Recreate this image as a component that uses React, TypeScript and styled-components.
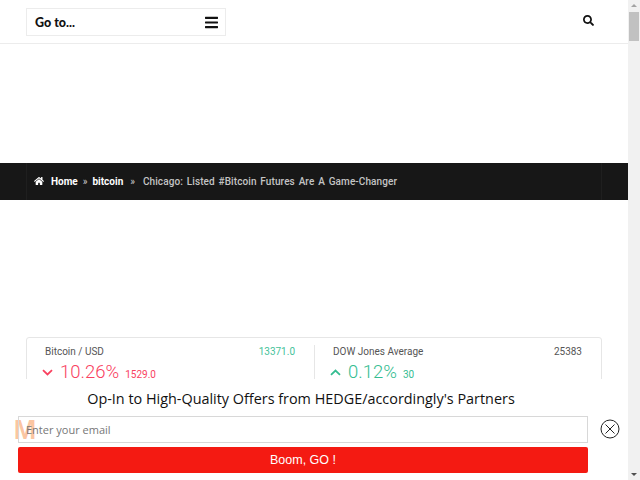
import { createGlobalStyle } from "styled-components";
import styled from "styled-components";
import { FaBars, FaHome, FaSearch } from "react-icons/fa";

const GlobalStyle = createGlobalStyle`
  html, body {
    margin: 0;
    padding: 0;
    background: #fff;
    font-family: "Liberation Sans", Arial, sans-serif;
    overflow: hidden;
  }
`;

const Page = styled.div`
  width: 628px;
  height: 480px;
  overflow: hidden;
`;

const Header = styled.header`
  height: 35px;
  border-bottom: 1px solid #ececec;
  padding: 8px 26px 0;
  margin-bottom: 119px;
  display: flex;
  justify-content: space-between;
  align-items: flex-start;
`;

const GoTo = styled.div`
  width: 200px;
  height: 28px;
  box-sizing: border-box;
  border: 1px solid #ececec;
  padding: 0 7px 0 8px;
  display: flex;
  align-items: center;
  justify-content: space-between;
  font-family: "Lato", sans-serif;
  font-weight: 900;
  font-size: 12.5px;
  color: #111;
  svg {
    width: 13px;
    height: 15px;
  }
`;

const SearchBtn = styled.div`
  margin: 7px 8px 0 0;
  color: #111;
  display: flex;
  svg {
    width: 11px;
    height: 11px;
  }
`;

const Crumbs = styled.div`
  height: 37px;
  background: #171717;
  padding: 0 26px;
  margin-bottom: 137px;
`;

const CrumbsInner = styled.div`
  height: 100%;
  border-left: 1px solid #1f1f1f;
  border-right: 1px solid #1f1f1f;
  padding: 0 0 1px 7px;
  box-sizing: border-box;
  display: flex;
  align-items: center;
  font-family: "Roboto", sans-serif;
  font-size: 10px;
  font-weight: 700;
  color: #fff;
  svg {
    width: 10px;
    height: 10px;
    margin-right: 7px;
  }
`;

const Sep = styled.span`
  color: #ccc;
  margin: 0 5px;
  font-weight: 400;
`;

const LastSep = styled(Sep)`
  margin: 0 8px 0 7px;
`;

const Current = styled.span`
  color: #c4c4c4;
  font-weight: 500;
  letter-spacing: 0.1px;
  word-spacing: 1.2px;
`;

const Ticker = styled.section`
  margin: 0 26px;
  border: 1px solid #e6e6e6;
  border-radius: 3px;
  height: 120px;
  padding-top: 7px;
  box-sizing: border-box;
  display: grid;
  grid-template-columns: 287px 1fr;
`;

const Quote = styled.div<{ $divided?: boolean }>`
  height: 60px;
  padding: 0 19px 0 18px;
  border-left: ${(p) => (p.$divided ? "1px solid #e6e6e6" : "none")};
`;

const QuoteTop = styled.div`
  display: flex;
  justify-content: space-between;
  font-family: "Roboto", sans-serif;
  font-size: 10px;
  line-height: 14px;
  color: #555;
`;

const Price = styled.span<{ $up?: boolean }>`
  color: ${(p) => (p.$up ? "#45c29a" : "#555")};
`;

const QuoteBottom = styled.div<{ $up?: boolean }>`
  display: flex;
  align-items: baseline;
  margin: 1px 0 0 -3px;
  color: ${(p) => (p.$up ? "#35bd91" : "#f9415f")};
  font-family: "Roboto", sans-serif;
  svg {
    width: 11px;
    height: 7px;
    margin-right: 7px;
    align-self: center;
  }
`;

const Pct = styled.span`
  font-size: 18.5px;
  font-weight: 300;
  line-height: 24px;
`;

const Diff = styled.span`
  font-size: 10px;
  margin-left: 6px;
`;

const Popup = styled.aside`
  position: fixed;
  left: 0;
  right: 12px;
  bottom: 0;
  height: 101px;
  background: #fff;
  font-family: "Open Sans", sans-serif;
`;

const PopupTitle = styled.div`
  width: 602px;
  text-align: center;
  font-size: 14.4px;
  line-height: 20px;
  color: #111;
  margin-top: 10px;
`;

const PopupForm = styled.div`
  margin: 7px 0 0 18px;
  width: 570px;
  display: flex;
  flex-direction: column;
  gap: 4px;
`;

const EmailBox = styled.div`
  height: 27px;
  box-sizing: border-box;
  border: 1px solid #d8d8d8;
  padding-left: 7px;
  font-size: 11px;
  line-height: 26px;
  color: #777;
`;

const GoButton = styled.div`
  height: 26px;
  background: #f41a12;
  border-radius: 2px;
  color: #fff;
  text-align: center;
  font-family: "Liberation Sans", Arial, sans-serif;
  font-size: 12.5px;
  line-height: 26px;
`;

const Watermark = styled.div`
  position: absolute;
  z-index: -1;
  left: 10px;
  top: 36px;
  width: 30px;
  height: 30px;
  color: rgba(247, 140, 70, 0.5);
  font-family: "Liberation Sans", Arial, sans-serif;
  font-weight: 700;
  font-size: 27px;
  line-height: 30px;
  text-align: center;
`;

const CloseBtn = styled.div`
  position: absolute;
  left: 600px;
  top: 40px;
  svg {
    display: block;
  }
`;

const Scrollbar = styled.div`
  position: fixed;
  top: 0;
  right: 0;
  bottom: 0;
  width: 12px;
  background: #f1f1f1;
`;

const ScrollThumb = styled.div`
  position: absolute;
  top: 12px;
  left: 1px;
  width: 10px;
  height: 29px;
  background: #c1c1c1;
`;

const ScrollArrow = styled.div<{ $down?: boolean }>`
  position: absolute;
  left: 3px;
  width: 0;
  height: 0;
  border-left: 3px solid transparent;
  border-right: 3px solid transparent;
  ${(p) =>
    p.$down
      ? "bottom: 4px; border-top: 3px solid #505050;"
      : "top: 4px; border-bottom: 3px solid #a3a3a3;"}
`;

export default function App() {
  return (
    <Page>
      <GlobalStyle />
      <Header>
        <GoTo>
          Go to...
          <FaBars />
        </GoTo>
        <SearchBtn>
          <FaSearch />
        </SearchBtn>
      </Header>
      <Crumbs>
        <CrumbsInner>
          <FaHome />
          Home
          <Sep>»</Sep>
          bitcoin
          <LastSep>»</LastSep>
          <Current>Chicago: Listed #Bitcoin Futures Are A Game-Changer</Current>
        </CrumbsInner>
      </Crumbs>
      <Ticker>
        <Quote>
          <QuoteTop>
            <span>Bitcoin / USD</span>
            <Price $up>13371.0</Price>
          </QuoteTop>
          <QuoteBottom>
            <svg viewBox="0 0 11 7" fill="none" stroke="currentColor" strokeWidth="1.8">
              <path d="M1 1.2 5.5 5.4 10 1.2" />
            </svg>
            <Pct>10.26%</Pct>
            <Diff>1529.0</Diff>
          </QuoteBottom>
        </Quote>
        <Quote $divided>
          <QuoteTop>
            <span>DOW Jones Average</span>
            <Price>25383</Price>
          </QuoteTop>
          <QuoteBottom $up>
            <svg viewBox="0 0 11 7" fill="none" stroke="currentColor" strokeWidth="1.8">
              <path d="M1 5.8 5.5 1.6 10 5.8" />
            </svg>
            <Pct>0.12%</Pct>
            <Diff>30</Diff>
          </QuoteBottom>
        </Quote>
      </Ticker>
      <Popup>
        <PopupTitle>Op-In to High-Quality Offers from HEDGE/accordingly's Partners</PopupTitle>
        <PopupForm>
          <EmailBox>Enter your email</EmailBox>
          <GoButton>Boom, GO !</GoButton>
        </PopupForm>
        <Watermark>M</Watermark>
        <CloseBtn>
          <svg width="20" height="20" viewBox="0 0 20 20" fill="none" stroke="#222" strokeWidth="1">
            <circle cx="10" cy="10" r="9" />
            <path d="M5.5 5.5 14.5 14.5M14.5 5.5 5.5 14.5" />
          </svg>
        </CloseBtn>
      </Popup>
      <Scrollbar>
        <ScrollArrow />
        <ScrollThumb />
        <ScrollArrow $down />
      </Scrollbar>
    </Page>
  );
}
